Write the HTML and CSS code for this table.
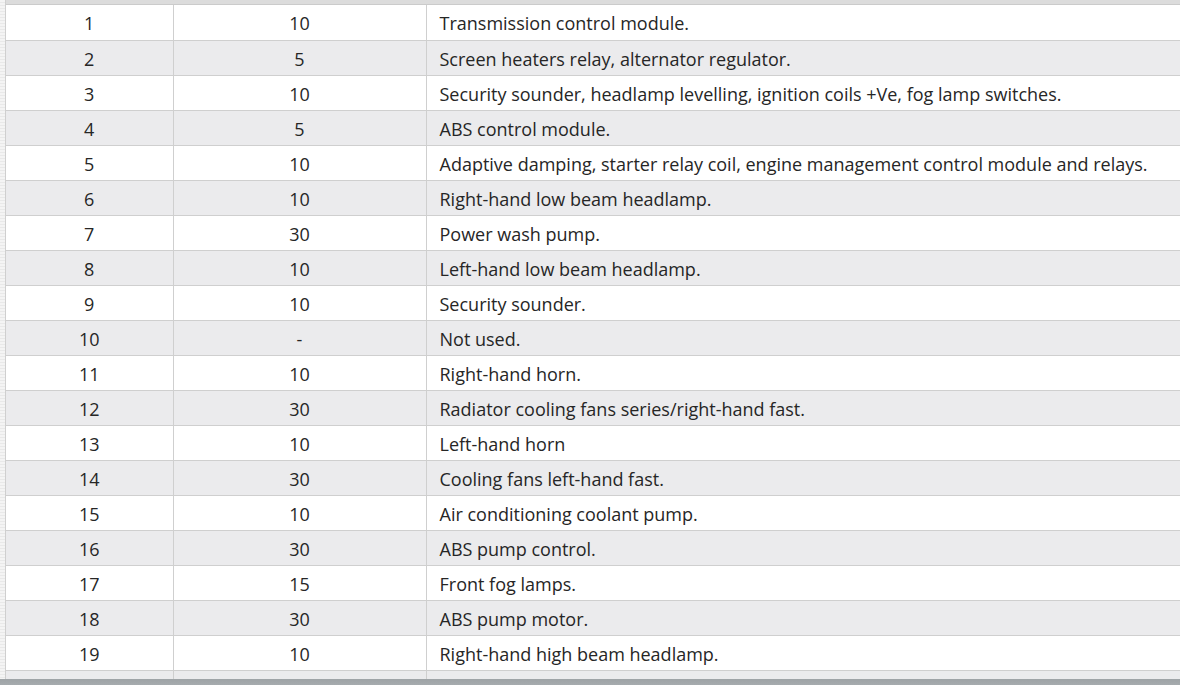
FILE: index.html
```html
<!DOCTYPE html>
<html>
<head>
<meta charset="utf-8">
<link rel="stylesheet" href="styles.css">
</head>
<body>
<div class="page">
  <div class="frame">
    <div class="strip"></div>
    <div class="viewport">
      <div class="head-edge"></div>
      <table class="fuses">
        <tbody>
          <tr><td class="num">1</td><td class="amp">10</td><td class="desc">Transmission control module.</td></tr>
          <tr><td class="num">2</td><td class="amp">5</td><td class="desc">Screen heaters relay, alternator regulator.</td></tr>
          <tr><td class="num">3</td><td class="amp">10</td><td class="desc">Security sounder, headlamp levelling, ignition coils +Ve, fog lamp switches.</td></tr>
          <tr><td class="num">4</td><td class="amp">5</td><td class="desc">ABS control module.</td></tr>
          <tr><td class="num">5</td><td class="amp">10</td><td class="desc">Adaptive damping, starter relay coil, engine management control module and relays.</td></tr>
          <tr><td class="num">6</td><td class="amp">10</td><td class="desc">Right-hand low beam headlamp.</td></tr>
          <tr><td class="num">7</td><td class="amp">30</td><td class="desc">Power wash pump.</td></tr>
          <tr><td class="num">8</td><td class="amp">10</td><td class="desc">Left-hand low beam headlamp.</td></tr>
          <tr><td class="num">9</td><td class="amp">10</td><td class="desc">Security sounder.</td></tr>
          <tr><td class="num">10</td><td class="amp">-</td><td class="desc">Not used.</td></tr>
          <tr><td class="num">11</td><td class="amp">10</td><td class="desc">Right-hand horn.</td></tr>
          <tr><td class="num">12</td><td class="amp">30</td><td class="desc">Radiator cooling fans series/right-hand fast.</td></tr>
          <tr><td class="num">13</td><td class="amp">10</td><td class="desc">Left-hand horn</td></tr>
          <tr><td class="num">14</td><td class="amp">30</td><td class="desc">Cooling fans left-hand fast.</td></tr>
          <tr><td class="num">15</td><td class="amp">10</td><td class="desc">Air conditioning coolant pump.</td></tr>
          <tr><td class="num">16</td><td class="amp">30</td><td class="desc">ABS pump control.</td></tr>
          <tr><td class="num">17</td><td class="amp">15</td><td class="desc">Front fog lamps.</td></tr>
          <tr><td class="num">18</td><td class="amp">30</td><td class="desc">ABS pump motor.</td></tr>
          <tr><td class="num">19</td><td class="amp">10</td><td class="desc">Right-hand high beam headlamp.</td></tr>
          <tr><td class="num"></td><td class="amp"></td><td class="desc"></td></tr>
        </tbody>
      </table>
    </div>
  </div>
  <div class="bottom-bar"></div>
</div>
</body>
</html>
```

FILE: styles.css
```css
html, body {
  margin: 0;
  padding: 0;
  background: #ffffff;
}

.page {
  width: 1180px;
  height: 685px;
  display: flex;
  flex-direction: column;
  overflow: hidden;
}

.frame {
  flex: 1;
  display: flex;
  overflow: hidden;
}

.strip {
  width: 5px;
  flex: none;
  background: repeating-linear-gradient(180deg, #f4f4f4 0, #f4f4f4 2px, #e9e9e9 2px, #e9e9e9 3px);
}

.viewport {
  flex: 1;
  overflow: hidden;
  border-left: 1px solid #cfcfcf;
}

.head-edge {
  height: 4px;
  background: #dcdcdc;
  border-bottom: 1px solid #cbcbcb;
}

.fuses {
  width: 1260px;
  border-collapse: collapse;
  font-family: "Open Sans", "Noto Sans", sans-serif;
  font-size: 18px;
  color: #262626;
}

.fuses tr:nth-child(even) td {
  background: #ebebed;
}

.fuses td {
  height: 35px;
  padding: 2px 0 0 0;
  border-bottom: 1px solid #cfcfcf;
  border-right: 1px solid #cfcfcf;
  vertical-align: middle;
  box-sizing: border-box;
  line-height: 20px;
}

.fuses .num {
  width: 167px;
  text-align: center;
}

.fuses .amp {
  width: 253px;
  text-align: center;
}

.fuses .desc {
  padding-left: 13px;
  text-align: left;
}

.bottom-bar {
  height: 6px;
  flex: none;
  background: linear-gradient(180deg, #9ea3a6, #a6abae);
}
```
